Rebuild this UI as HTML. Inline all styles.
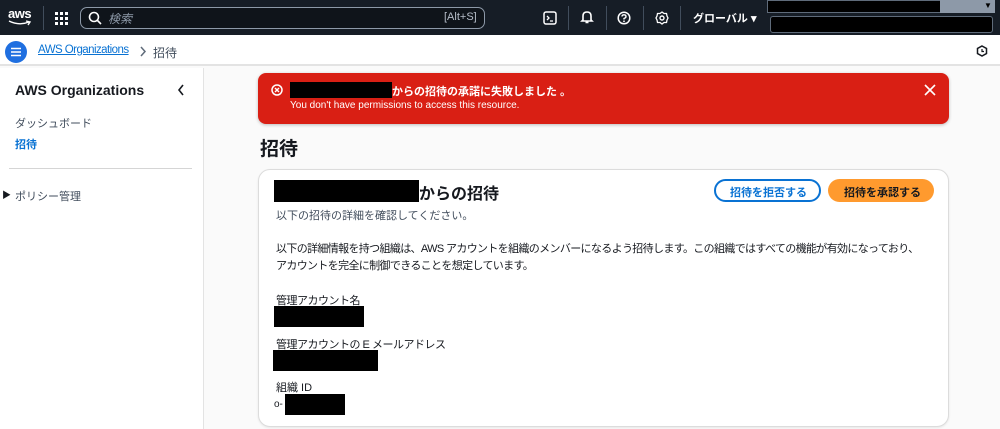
<!DOCTYPE html>
<html><head><meta charset="utf-8"><style>
*{margin:0;padding:0;box-sizing:border-box}
body{width:1000px;height:429px;overflow:hidden;background:#fafafa;font-family:"Liberation Sans","Noto Sans CJK JP",sans-serif;color:#16191f;position:relative}
.a{position:absolute}
.t{position:absolute;white-space:nowrap}
.blk{position:absolute;background:#000}
</style></head><body>
<!-- top bar -->
<div class="a" style="left:0;top:0;width:1000px;height:35px;background:#161d26"></div>
<div class="t" style="left:8px;top:6px;color:#fff;font-size:13px;font-weight:bold;letter-spacing:-0.5px">aws</div>
<svg class="a" style="left:8px;top:20px" width="24" height="7"><path d="M1 1 Q11 6 21 2 M18 1 L22 2 L20 5" stroke="#fff" stroke-width="1.4" fill="none"/></svg>
<div class="a" style="left:43px;top:6px;width:1px;height:24px;background:#414d5c"></div>
<svg class="a" style="left:55px;top:12px" width="13" height="13" fill="#fff"><rect x="0" y="0" width="3" height="3"/><rect x="5" y="0" width="3" height="3"/><rect x="10" y="0" width="3" height="3"/><rect x="0" y="5" width="3" height="3"/><rect x="5" y="5" width="3" height="3"/><rect x="10" y="5" width="3" height="3"/><rect x="0" y="10" width="3" height="3"/><rect x="5" y="10" width="3" height="3"/><rect x="10" y="10" width="3" height="3"/></svg>
<div class="a" style="left:80px;top:7px;width:405px;height:22px;border:1px solid #8d99a8;border-radius:7px;background:#0f141a"></div>
<svg class="a" style="left:88px;top:11px" width="14" height="14"><circle cx="6" cy="6" r="4.5" stroke="#fff" stroke-width="1.6" fill="none"/><path d="M9.5 9.5 L13 13" stroke="#fff" stroke-width="1.6"/></svg>
<div class="t" style="left:108px;top:10px;color:#8d99a8;font-size:12px;font-style:italic">検索</div>
<div class="t" style="left:444px;top:11px;color:#b6bec9;font-size:11px">[Alt+S]</div>
<svg class="a" style="left:543px;top:11px" width="14" height="14"><rect x="1" y="1" width="12" height="12" rx="2" stroke="#fff" stroke-width="1.5" fill="none"/><path d="M4 5 L6 7 L4 9 M7 10 H10" stroke="#fff" stroke-width="1.3" fill="none"/></svg>
<div class="a" style="left:568px;top:6px;width:1px;height:24px;background:#414d5c"></div>
<svg class="a" style="left:580px;top:10px" width="14" height="15"><path d="M3 10 V6 Q3 2 7 2 Q11 2 11 6 V10 L12 11 H2 Z M5.5 12.5 H8.5" stroke="#fff" stroke-width="1.6" fill="none"/></svg>
<div class="a" style="left:606px;top:6px;width:1px;height:24px;background:#414d5c"></div>
<svg class="a" style="left:617px;top:11px" width="14" height="14"><circle cx="7" cy="7" r="5.8" stroke="#fff" stroke-width="1.5" fill="none"/><path d="M5 5.5 Q5 3.8 7 3.8 Q9 3.8 9 5.5 Q9 6.8 7 7.5 V8.5" stroke="#fff" stroke-width="1.4" fill="none"/><circle cx="7" cy="10.3" r="0.9" fill="#fff"/></svg>
<div class="a" style="left:643px;top:6px;width:1px;height:24px;background:#414d5c"></div>
<svg class="a" style="left:655px;top:11px" width="14" height="14"><circle cx="7" cy="7" r="2" stroke="#fff" stroke-width="1.4" fill="none"/><path d="M7 1 L9 2.5 L11.5 2.5 L12 5 L13 7 L12 9 L11.5 11.5 L9 11.5 L7 13 L5 11.5 L2.5 11.5 L2 9 L1 7 L2 5 L2.5 2.5 L5 2.5 Z" stroke="#fff" stroke-width="1.3" fill="none"/></svg>
<div class="a" style="left:680px;top:6px;width:1px;height:24px;background:#414d5c"></div>
<div class="t" style="left:693px;top:10px;color:#fff;font-size:11px;font-weight:bold">グローバル ▾</div>
<div class="a" style="left:767px;top:0;width:228px;height:13px;background:#000;border:1px solid #5f6b7a"></div>
<div class="a" style="left:940px;top:0;width:55px;height:13px;background:#8d99a8"></div>
<div class="t" style="left:984px;top:1px;color:#000;font-size:8px">▼</div>
<div class="a" style="left:770px;top:16px;width:223px;height:17px;background:#000;border:1px solid #5f6b7a;border-radius:3px"></div>
<!-- breadcrumb -->
<div class="a" style="left:0;top:35px;width:1000px;height:31px;background:#fff;border-bottom:2px solid #e3e3e3"></div>
<div class="a" style="left:5px;top:41px;width:22px;height:22px;border-radius:50%;background:#1f6fe0"></div>
<svg class="a" style="left:10px;top:47px" width="12" height="10"><path d="M1 1.5 H11 M1 5 H11 M1 8.5 H11" stroke="#fff" stroke-width="1.6"/></svg>
<div class="t" style="left:38px;top:44px;color:#0972d3;font-size:11.5px;letter-spacing:-0.55px;text-decoration:underline">AWS Organizations</div>
<svg class="a" style="left:139px;top:46px" width="8" height="11"><path d="M2 1 L6 5.5 L2 10" stroke="#5f6b7a" stroke-width="1.5" fill="none"/></svg>
<div class="t" style="left:153px;top:44px;color:#414d5c;font-size:12px">招待</div>
<svg class="a" style="left:976px;top:45px" width="12" height="12"><path d="M6 1 L10.5 3.5 V8.5 L6 11 L1.5 8.5 V3.5 Z" stroke="#16191f" stroke-width="1.5" fill="none"/><path d="M6 4 V6.5 H8" stroke="#16191f" stroke-width="1.2" fill="none"/></svg>
<!-- sidebar -->
<div class="a" style="left:0;top:68px;width:204px;height:361px;background:#fff;border-right:1px solid #e3e3e3"></div>
<div class="t" style="left:15px;top:82px;font-size:14px;font-weight:bold">AWS Organizations</div>
<svg class="a" style="left:177px;top:84px" width="8" height="12"><path d="M6 1 L2 6 L6 11" stroke="#16191f" stroke-width="1.6" fill="none"/></svg>
<div class="t" style="left:15px;top:115px;font-size:11px;color:#414d5c">ダッシュボード</div>
<div class="t" style="left:15px;top:136px;font-size:11px;color:#0972d3;font-weight:bold">招待</div>
<div class="a" style="left:9px;top:168px;width:183px;height:1px;background:#d5d5d5"></div>
<div class="t" style="left:2px;top:188px;font-size:9px;color:#16191f">▶</div>
<div class="t" style="left:15px;top:188px;font-size:11px;color:#414d5c">ポリシー管理</div>
<!-- flash -->
<div class="a" style="left:258px;top:73px;width:691px;height:51px;background:#d91f14;border-radius:8px;box-shadow:0 1px 3px rgba(0,0,0,.25)"></div>
<svg class="a" style="left:271px;top:84px" width="12" height="12"><circle cx="6" cy="6" r="5" stroke="#fff" stroke-width="1.5" fill="none"/><path d="M4 4 L8 8 M8 4 L4 8" stroke="#fff" stroke-width="1.4"/></svg>
<div class="blk" style="left:290px;top:82px;width:102px;height:16px"></div>
<div class="t" style="left:392px;top:83px;font-size:11px;color:#fff;font-weight:bold">からの招待の承諾に失敗しました 。</div>
<div class="t" style="left:290px;top:100px;font-size:10px;color:#fff">You don't have permissions to access this resource.</div>
<svg class="a" style="left:924px;top:84px" width="12" height="12"><path d="M1 1 L11 11 M11 1 L1 11" stroke="#fff" stroke-width="1.6"/></svg>
<!-- heading -->
<div class="t" style="left:260px;top:134px;font-size:19px;font-weight:bold">招待</div>
<!-- card -->
<div class="a" style="left:258px;top:169px;width:691px;height:258px;background:#fff;border:1px solid #dcdcdc;border-radius:12px;box-shadow:0 1px 2px rgba(0,0,0,.08)"></div>
<div class="blk" style="left:274px;top:180px;width:145px;height:22px"></div>
<div class="t" style="left:419px;top:180px;font-size:16px;font-weight:bold">からの招待</div>
<div class="t" style="left:276px;top:207px;font-size:11px;color:#414d5c">以下の招待の詳細を確認してください。</div>
<div class="a" style="left:714px;top:179px;width:107px;height:23px;border:2px solid #0972d3;border-radius:14px;background:#fff"></div>
<div class="t" style="left:730px;top:184px;font-size:11px;color:#0972d3;font-weight:bold">招待を拒否する</div>
<div class="a" style="left:828px;top:179px;width:106px;height:23px;background:#ff9a2e;border-radius:14px"></div>
<div class="t" style="left:844px;top:184px;font-size:11px;color:#16191f;font-weight:bold">招待を承認する</div>
<div class="t" style="left:276px;top:240px;font-size:11px;letter-spacing:-0.65px">以下の詳細情報を持つ組織は、AWS アカウントを組織のメンバーになるよう招待します。この組織ではすべての機能が有効になっており、</div>
<div class="t" style="left:276px;top:257px;font-size:11px;letter-spacing:-0.65px">アカウントを完全に制御できることを想定しています。</div>
<div class="t" style="left:276px;top:292px;font-size:11px;letter-spacing:-0.5px">管理アカウント名</div>
<div class="blk" style="left:274px;top:306px;width:90px;height:21px"></div>
<div class="t" style="left:276px;top:336px;font-size:11px;letter-spacing:-0.5px">管理アカウントの E メールアドレス</div>
<div class="blk" style="left:273px;top:350px;width:105px;height:21px"></div>
<div class="t" style="left:276px;top:379px;font-size:11px">組織 ID</div>
<div class="t" style="left:274px;top:399px;font-size:10px">o-</div>
<div class="blk" style="left:285px;top:394px;width:60px;height:21px"></div>
</body></html>
